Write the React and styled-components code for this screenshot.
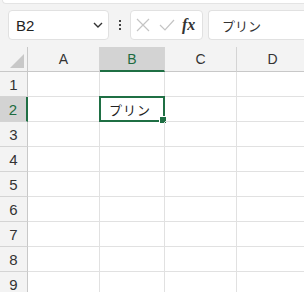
import React from 'react';
import styled, { createGlobalStyle } from 'styled-components';

const GlobalStyle = createGlobalStyle`
  html, body { margin: 0; padding: 0; background: #ffffff; }
  body { font-family: "Noto Sans", "Liberation Sans", "Noto Sans CJK JP", sans-serif; overflow: hidden; }
`;

const columns = [
  { name: 'A', width: 72 },
  { name: 'B', width: 65 },
  { name: 'C', width: 72 },
  { name: 'D', width: 72 },
];

const rows = [1, 2, 3, 4, 5, 6, 7, 8, 9, 10];

export default function App() {
  return (
    <>
      <GlobalStyle />
      <Page>
        <Ribbon />
        <FormulaBar>
          <NameBox>
            <span>B2</span>
            <Chevron viewBox="0 0 10 6">
              <path d="M1 1 L5 5 L9 1" fill="none" stroke="#333" strokeWidth="1.4" />
            </Chevron>
          </NameBox>
          <Dots>
            <i /><i /><i />
          </Dots>
          <ActionBox>
            <svg width="14" height="14" viewBox="0 0 14 14">
              <path d="M1 1 L13 13 M13 1 L1 13" stroke="#c4c4c4" strokeWidth="1.2" />
            </svg>
            <svg width="16" height="12" viewBox="0 0 16 12">
              <path d="M1 6 L6 11 L15 1" fill="none" stroke="#c4c4c4" strokeWidth="1.2" />
            </svg>
            <Fx>fx</Fx>
          </ActionBox>
          <FormulaInput>プリン</FormulaInput>
        </FormulaBar>
        <Sheet>
          <HeaderRow>
            <Corner>
              <svg width="14" height="14" viewBox="0 0 14 14">
                <path d="M14 0 L14 14 L0 14 Z" fill="#c8c8c8" />
              </svg>
            </Corner>
            {columns.map((c) => (
              <ColHeader key={c.name} $w={c.width} $active={c.name === 'B'}>
                {c.name}
              </ColHeader>
            ))}
          </HeaderRow>
          {rows.map((r) => (
            <Row key={r}>
              <RowHeader $active={r === 2}>{r}</RowHeader>
              {columns.map((c) => {
                const selected = r === 2 && c.name === 'B';
                return (
                  <Cell key={c.name} $w={c.width}>
                    {selected && (
                      <>
                        <CellText>プリン</CellText>
                        <Selection />
                        <FillHandle />
                      </>
                    )}
                  </Cell>
                );
              })}
            </Row>
          ))}
        </Sheet>
      </Page>
    </>
  );
}

const Page = styled.div`
  width: 304px;
  height: 292px;
  overflow: hidden;
  background: #f3f3f3;
  display: flex;
  flex-direction: column;
  & > * { flex-shrink: 0; }
`;

const Ribbon = styled.div`
  height: 3px;
  margin-left: 2px;
  background: #ffffff;
  border-bottom: 1px solid #e4e4e4;
  border-left: 1px solid #e4e4e4;
  border-bottom-left-radius: 4px;
`;

const FormulaBar = styled.div`
  display: flex;
  align-items: center;
  height: 30px;
  padding: 6px 0 7px 8px;
`;

const NameBox = styled.div`
  box-sizing: border-box;
  width: 101px;
  height: 30px;
  background: #ffffff;
  border: 1px solid #e1e1e1;
  border-radius: 4px;
  display: flex;
  align-items: center;
  justify-content: space-between;
  padding: 0 5px 0 7px;
  font-family: "Liberation Sans", "Noto Sans", sans-serif;
  font-size: 15px;
  color: #222;
`;

const Chevron = styled.svg`
  width: 10px;
  height: 6px;
`;

const Dots = styled.div`
  width: 21px;
  display: flex;
  flex-direction: column;
  align-items: center;
  gap: 2px;
  i {
    width: 2px;
    height: 2px;
    background: #444;
  }
`;

const ActionBox = styled.div`
  box-sizing: border-box;
  width: 73px;
  height: 30px;
  background: #ffffff;
  border: 1px solid #e1e1e1;
  border-radius: 4px;
  display: flex;
  align-items: center;
  gap: 9px;
  padding-left: 5px;
`;

const Fx = styled.span`
  font-family: "Liberation Serif", "DejaVu Serif", serif;
  font-style: italic;
  font-weight: bold;
  font-size: 16px;
  color: #333;
  margin-left: -2px;
`;

const FormulaInput = styled.div`
  box-sizing: border-box;
  flex: 1;
  height: 30px;
  margin-left: 5px;
  background: #ffffff;
  border: 1px solid #e1e1e1;
  border-right: none;
  border-radius: 4px 0 0 4px;
  display: flex;
  align-items: center;
  padding-left: 13px;
  font-family: "Noto Sans CJK JP", sans-serif;
  font-size: 13px;
  color: #333;
`;

const Sheet = styled.div`
  display: flex;
  flex-direction: column;
  background: #ffffff;
  & > * { flex-shrink: 0; }
`;

const HeaderRow = styled.div`
  display: flex;
  height: 25px;
  background: #f3f3f3;
`;

const Corner = styled.div`
  box-sizing: border-box;
  width: 28px;
  flex-shrink: 0;
  border-right: 1px solid #c8c8c8;
  border-bottom: 1px solid #c8c8c8;
  display: flex;
  align-items: flex-end;
  justify-content: flex-end;
  padding: 0 3px 3px 0;
`;

const ColHeader = styled.div`
  box-sizing: border-box;
  width: ${(p) => p.$w}px;
  flex-shrink: 0;
  display: flex;
  align-items: center;
  justify-content: center;
  font-family: "Liberation Sans", "Noto Sans", sans-serif;
  font-size: 14px;
  color: ${(p) => (p.$active ? '#1d6b40' : '#333')};
  background: ${(p) => (p.$active ? '#d3d3d3' : '#f3f3f3')};
  border-right: 1px solid #d4d4d4;
  border-bottom: ${(p) => (p.$active ? '2px solid #1f6f44' : '1px solid #c8c8c8')};
  padding-top: ${(p) => (p.$active ? '1px' : '0')};
`;

const Row = styled.div`
  display: flex;
  height: 25px;
`;

const RowHeader = styled.div`
  box-sizing: border-box;
  width: 28px;
  flex-shrink: 0;
  display: flex;
  align-items: center;
  justify-content: center;
  font-family: "Liberation Sans", "Noto Sans", sans-serif;
  font-size: 15px;
  color: ${(p) => (p.$active ? '#1d6b40' : '#333')};
  background: ${(p) => (p.$active ? '#d3d3d3' : '#f3f3f3')};
  border-bottom: 1px solid #d4d4d4;
  border-right: ${(p) => (p.$active ? '2px solid #1f6f44' : '1px solid #c8c8c8')};
`;

const Cell = styled.div`
  position: relative;
  box-sizing: border-box;
  width: ${(p) => p.$w}px;
  flex-shrink: 0;
  border-right: 1px solid #e1e1e1;
  border-bottom: 1px solid #e1e1e1;
  display: flex;
  align-items: center;
`;

const CellText = styled.span`
  padding-left: 9px;
  font-family: "Noto Sans CJK JP", sans-serif;
  font-size: 13px;
  letter-spacing: 1px;
  color: #222;
`;

const Selection = styled.div`
  position: absolute;
  left: -1px;
  top: -1px;
  right: -1px;
  bottom: -1px;
  border: 2px solid #1f6f44;
`;

const FillHandle = styled.div`
  position: absolute;
  right: -3px;
  bottom: -3px;
  width: 6px;
  height: 6px;
  background: #1f6f44;
  border: 1px solid #ffffff;
`;
